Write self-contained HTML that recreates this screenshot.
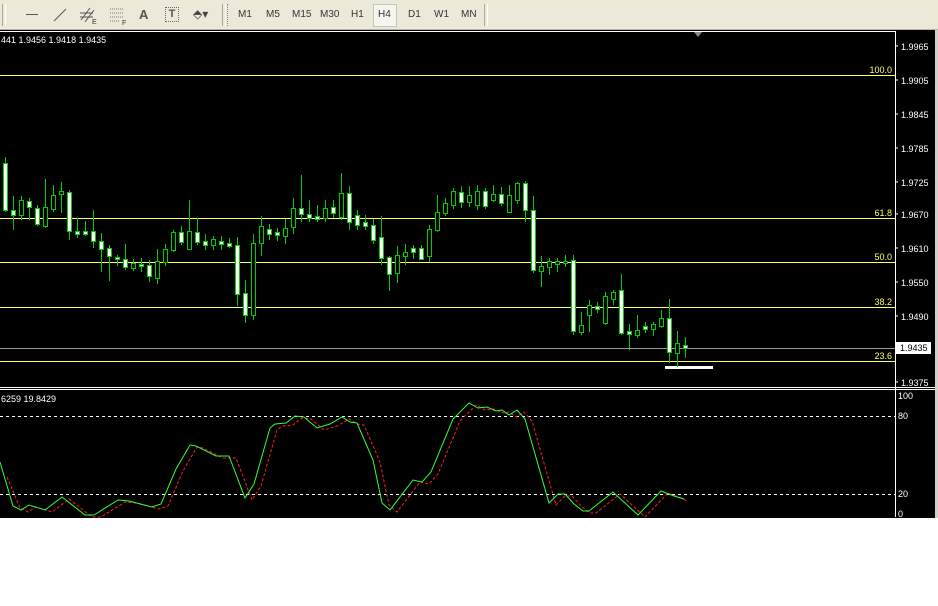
<!DOCTYPE html>
<html><head><meta charset="utf-8"><style>
body{margin:0;width:938px;height:606px;background:#fff;overflow:hidden;font-family:"Liberation Sans",sans-serif;position:relative}
#tb{position:absolute;left:0;top:0;width:938px;height:29px;background:#ece9d8;border-bottom:1px solid #b8b4a0}
#tb span{position:absolute;top:9px;font-size:10px;color:#333}
.sep{position:absolute;top:4px;width:2px;height:22px;border-left:1px solid #aca899;border-right:1px solid #fff}
#h4{position:absolute;left:373px;top:4px;width:22px;height:21px;background:#f6f5ef;border:1px solid #c8c5b5}
</style></head><body>
<div id="tb">
<div class="sep" style="left:2px"></div>
<div style="position:absolute;left:26px;top:14px;width:12px;height:1px;background:#555"></div>
<svg style="position:absolute;left:50px;top:6px" width="20" height="18"><line x1="4" y1="15" x2="16" y2="3" stroke="#555"/></svg>
<svg style="position:absolute;left:78px;top:4px" width="22" height="22"><g stroke="#555" fill="none"><line x1="3" y1="16" x2="12" y2="4"/><line x1="7" y1="18" x2="16" y2="6"/><line x1="2" y1="9" x2="15" y2="9"/><line x1="2" y1="13" x2="15" y2="13"/></g><text x="14" y="20" font-size="7" fill="#333">E</text></svg>
<svg style="position:absolute;left:108px;top:5px" width="22" height="20"><g stroke="#777" stroke-dasharray="1,1"><line x1="2" y1="4" x2="16" y2="4"/><line x1="2" y1="8" x2="16" y2="8"/><line x1="2" y1="12" x2="16" y2="12"/><line x1="2" y1="16" x2="12" y2="16"/></g><text x="14" y="20" font-size="7" fill="#333">F</text></svg>
<span style="left:139px;top:7px;font-size:13px;font-weight:bold;color:#555">A</span>
<div style="position:absolute;left:165px;top:7px;width:12px;height:13px;border:1px dotted #666;font-size:11px;font-weight:bold;text-align:center;line-height:13px;color:#555">T</div>
<span style="left:193px;top:7px;font-size:12px;color:#444">⬘▾</span>
<div class="sep" style="left:222px"></div>
<div class="sep" style="left:227px;border-left:1px dotted #888;border-right:none"></div>
<div id="h4"></div>
<span style="left:238px">M1</span><span style="left:266px">M5</span><span style="left:292px">M15</span><span style="left:320px">M30</span><span style="left:351px">H1</span><span style="left:378px">H4</span><span style="left:408px">D1</span><span style="left:434px">W1</span><span style="left:461px">MN</span>
<div class="sep" style="left:484px"></div>
</div>
<svg style="position:absolute;left:0;top:30px" width="938" height="488" viewBox="0 30 938 488">
<rect x="0" y="30" width="935" height="488" fill="#000"/>
<rect x="935" y="30" width="3" height="488" fill="#d4d0c8"/>
<line x1="0" y1="31.5" x2="895" y2="31.5" stroke="#fff"/>
<line x1="895.5" y1="31" x2="895.5" y2="517" stroke="#fff"/>
<polygon points="694,32 702,32 698,37" fill="#888"/>
<line x1="0" y1="387.5" x2="935" y2="387.5" stroke="#fff"/>
<line x1="0" y1="389.5" x2="935" y2="389.5" stroke="#fff"/>
<g stroke="#ffff66" stroke-width="1">
<line x1="0" y1="75.5" x2="895" y2="75.5"/><line x1="0" y1="218.5" x2="895" y2="218.5"/><line x1="0" y1="262.5" x2="895" y2="262.5"/><line x1="0" y1="307.5" x2="895" y2="307.5"/><line x1="0" y1="361.5" x2="895" y2="361.5"/>
</g>
<line x1="0" y1="348.5" x2="895" y2="348.5" stroke="#9a9a9a"/>
<g fill="#ffff66" font-size="9" font-family="Liberation Sans" text-anchor="end">
<text x="892" y="73">100.0</text><text x="892" y="216">61.8</text><text x="892" y="260">50.0</text><text x="892" y="305">38.2</text><text x="892" y="359">23.6</text>
</g>
<rect x="665" y="366" width="48" height="3" fill="#fff"/>
<g fill="#fff" font-size="9" font-family="Liberation Sans">
<text x="1" y="43">441 1.9456 1.9418 1.9435</text>
<text x="1" y="402">6259 19.8429</text>
<text x="901" y="50">1.9965</text><text x="901" y="84">1.9905</text><text x="901" y="118">1.9845</text><text x="901" y="152">1.9785</text><text x="901" y="186">1.9725</text><text x="901" y="218">1.9670</text><text x="901" y="252">1.9610</text><text x="901" y="286">1.9550</text><text x="901" y="320">1.9490</text><text x="901" y="386">1.9375</text>
<text x="898" y="399">100</text><text x="898" y="419">80</text><text x="898" y="497">20</text><text x="898" y="517">0</text>
</g>
<g stroke="#fff"><line x1="895" y1="46" x2="898" y2="46"/><line x1="895" y1="80" x2="898" y2="80"/><line x1="895" y1="114" x2="898" y2="114"/><line x1="895" y1="148" x2="898" y2="148"/><line x1="895" y1="182" x2="898" y2="182"/><line x1="895" y1="214" x2="898" y2="214"/><line x1="895" y1="248" x2="898" y2="248"/><line x1="895" y1="282" x2="898" y2="282"/><line x1="895" y1="316" x2="898" y2="316"/><line x1="895" y1="382" x2="898" y2="382"/></g>
<rect x="896" y="342" width="35" height="12" fill="#fff"/>
<text x="900" y="351" font-size="9" font-family="Liberation Sans" fill="#000">1.9435</text>
<g stroke="#fff" stroke-dasharray="3,3"><line x1="0" y1="416.5" x2="895" y2="416.5"/><line x1="0" y1="494.5" x2="895" y2="494.5"/></g>
<g stroke="#00cc00" stroke-width="1" fill="#000">
<!-- candles: wick then body -->
<line x1="5.5" y1="157" x2="5.5" y2="212"/><rect x="3.5" y="163.5" width="4" height="47" fill="#fff"/>
<line x1="13.5" y1="196" x2="13.5" y2="230"/><rect x="11.5" y="210.5" width="4" height="5" fill="#fff"/>
<line x1="21.5" y1="196" x2="21.5" y2="220"/><rect x="19.5" y="200.5" width="4" height="15"/>
<line x1="29.5" y1="198" x2="29.5" y2="220"/><rect x="27.5" y="201.5" width="4" height="6" fill="#fff"/>
<line x1="37.5" y1="205" x2="37.5" y2="226"/><rect x="35.5" y="208.5" width="4" height="16" fill="#fff"/>
<line x1="45.5" y1="179" x2="45.5" y2="228"/><rect x="43.5" y="207.5" width="4" height="19"/>
<line x1="53.5" y1="185" x2="53.5" y2="212"/><rect x="51.5" y="195.5" width="4" height="14"/>
<line x1="61.5" y1="182" x2="61.5" y2="213"/><rect x="59.5" y="191.5" width="4" height="3"/>
<line x1="69.5" y1="190" x2="69.5" y2="240"/><rect x="67.5" y="192.5" width="4" height="39" fill="#fff"/>
<line x1="77.5" y1="218" x2="77.5" y2="238"/><rect x="75.5" y="231.5" width="4" height="3" fill="#fff"/>
<line x1="85.5" y1="221" x2="85.5" y2="236"/><rect x="83.5" y="231.5" width="4" height="3" fill="#fff"/>
<line x1="93.5" y1="210" x2="93.5" y2="248"/><rect x="91.5" y="231.5" width="4" height="10" fill="#fff"/>
<line x1="101.5" y1="233" x2="101.5" y2="272"/><rect x="99.5" y="241.5" width="4" height="8" fill="#fff"/>
<line x1="109.5" y1="245" x2="109.5" y2="281"/><rect x="107.5" y="248.5" width="4" height="8" fill="#fff"/>
<line x1="117.5" y1="255" x2="117.5" y2="266"/><rect x="115.5" y="257.5" width="4" height="2" fill="#fff"/>
<line x1="125.5" y1="244" x2="125.5" y2="270"/><rect x="123.5" y="259.5" width="4" height="8" fill="#fff"/>
<line x1="133.5" y1="259" x2="133.5" y2="271"/><rect x="131.5" y="263.5" width="4" height="5"/>
<line x1="141.5" y1="258" x2="141.5" y2="272"/><rect x="139.5" y="264.5" width="4" height="2" fill="#fff"/>
<line x1="149.5" y1="260" x2="149.5" y2="282"/><rect x="147.5" y="265.5" width="4" height="11" fill="#fff"/>
<line x1="157.5" y1="249" x2="157.5" y2="284"/><rect x="155.5" y="261.5" width="4" height="17"/>
<line x1="165.5" y1="244" x2="165.5" y2="266"/><rect x="163.5" y="249.5" width="4" height="13"/>
<line x1="173.5" y1="230" x2="173.5" y2="252"/><rect x="171.5" y="232.5" width="4" height="18"/>
<line x1="181.5" y1="226" x2="181.5" y2="245"/><rect x="179.5" y="232.5" width="4" height="10" fill="#fff"/>
<line x1="189.5" y1="200" x2="189.5" y2="250"/><rect x="187.5" y="231.5" width="4" height="18"/>
<line x1="197.5" y1="218" x2="197.5" y2="245"/><rect x="195.5" y="232.5" width="4" height="10" fill="#fff"/>
<line x1="205.5" y1="234" x2="205.5" y2="250"/><rect x="203.5" y="241.5" width="4" height="4" fill="#fff"/>
<line x1="213.5" y1="236" x2="213.5" y2="250"/><rect x="211.5" y="239.5" width="4" height="6"/>
<line x1="221.5" y1="236" x2="221.5" y2="250"/><rect x="219.5" y="241.5" width="4" height="3" fill="#fff"/>
<line x1="229.5" y1="238" x2="229.5" y2="248"/><rect x="227.5" y="243.5" width="4" height="3" fill="#fff"/>
<line x1="237.5" y1="237" x2="237.5" y2="306"/><rect x="235.5" y="245.5" width="4" height="49" fill="#fff"/>
<line x1="245.5" y1="280" x2="245.5" y2="323"/><rect x="243.5" y="293.5" width="4" height="22" fill="#fff"/>
<line x1="253.5" y1="234" x2="253.5" y2="320"/><rect x="251.5" y="243.5" width="4" height="72"/>
<line x1="261.5" y1="216" x2="261.5" y2="256"/><rect x="259.5" y="226.5" width="4" height="17"/>
<line x1="269.5" y1="224" x2="269.5" y2="240"/><rect x="267.5" y="229.5" width="4" height="5" fill="#fff"/>
<line x1="277.5" y1="228" x2="277.5" y2="241"/><rect x="275.5" y="232.5" width="4" height="3" fill="#fff"/>
<line x1="285.5" y1="219" x2="285.5" y2="244"/><rect x="283.5" y="228.5" width="4" height="8"/>
<line x1="293.5" y1="198" x2="293.5" y2="234"/><rect x="291.5" y="208.5" width="4" height="19"/>
<line x1="301.5" y1="175" x2="301.5" y2="222"/><rect x="299.5" y="208.5" width="4" height="6" fill="#fff"/>
<line x1="309.5" y1="200" x2="309.5" y2="222"/><rect x="307.5" y="214.5" width="4" height="4" fill="#fff"/>
<line x1="317.5" y1="205" x2="317.5" y2="222"/><rect x="315.5" y="216.5" width="4" height="3" fill="#fff"/>
<line x1="325.5" y1="200" x2="325.5" y2="222"/><rect x="323.5" y="208.5" width="4" height="10"/>
<line x1="333.5" y1="200" x2="333.5" y2="218"/><rect x="331.5" y="207.5" width="4" height="6" fill="#fff"/>
<line x1="341.5" y1="173" x2="341.5" y2="220"/><rect x="339.5" y="193.5" width="4" height="24"/>
<line x1="349.5" y1="186" x2="349.5" y2="230"/><rect x="347.5" y="193.5" width="4" height="29" fill="#fff"/>
<line x1="357.5" y1="210" x2="357.5" y2="230"/><rect x="355.5" y="215.5" width="4" height="10" fill="#fff"/>
<line x1="365.5" y1="215" x2="365.5" y2="230"/><rect x="363.5" y="222.5" width="4" height="4" fill="#fff"/>
<line x1="373.5" y1="219" x2="373.5" y2="244"/><rect x="371.5" y="225.5" width="4" height="15" fill="#fff"/>
<line x1="381.5" y1="216" x2="381.5" y2="265"/><rect x="379.5" y="237.5" width="4" height="21" fill="#fff"/>
<line x1="389.5" y1="256" x2="389.5" y2="291"/><rect x="387.5" y="257.5" width="4" height="17" fill="#fff"/>
<line x1="397.5" y1="246" x2="397.5" y2="283"/><rect x="395.5" y="255.5" width="4" height="18"/>
<line x1="405.5" y1="244" x2="405.5" y2="265"/><rect x="403.5" y="252.5" width="4" height="4"/>
<line x1="413.5" y1="245" x2="413.5" y2="259"/><rect x="411.5" y="248.5" width="4" height="4" fill="#fff"/>
<line x1="421.5" y1="245" x2="421.5" y2="260"/><rect x="419.5" y="248.5" width="4" height="11" fill="#fff"/>
<line x1="429.5" y1="225" x2="429.5" y2="262"/><rect x="427.5" y="229.5" width="4" height="27"/>
<line x1="437.5" y1="195" x2="437.5" y2="232"/><rect x="435.5" y="212.5" width="4" height="18"/>
<line x1="445.5" y1="198" x2="445.5" y2="216"/><rect x="443.5" y="203.5" width="4" height="10"/>
<line x1="453.5" y1="188" x2="453.5" y2="209"/><rect x="451.5" y="191.5" width="4" height="14"/>
<line x1="461.5" y1="186" x2="461.5" y2="208"/><rect x="459.5" y="192.5" width="4" height="10" fill="#fff"/>
<line x1="469.5" y1="186" x2="469.5" y2="207"/><rect x="467.5" y="195.5" width="4" height="7"/>
<line x1="477.5" y1="185" x2="477.5" y2="210"/><rect x="475.5" y="191.5" width="4" height="14"/>
<line x1="485.5" y1="188" x2="485.5" y2="209"/><rect x="483.5" y="191.5" width="4" height="15" fill="#fff"/>
<line x1="493.5" y1="185" x2="493.5" y2="202"/><rect x="491.5" y="194.5" width="4" height="6"/>
<line x1="501.5" y1="187" x2="501.5" y2="206"/><rect x="499.5" y="194.5" width="4" height="9" fill="#fff"/>
<line x1="509.5" y1="185" x2="509.5" y2="210"/><rect x="507.5" y="195.5" width="4" height="17"/>
<line x1="517.5" y1="182" x2="517.5" y2="204"/><rect x="515.5" y="183.5" width="4" height="17"/>
<line x1="525.5" y1="181" x2="525.5" y2="222"/><rect x="523.5" y="183.5" width="4" height="27" fill="#fff"/>
<line x1="533.5" y1="196" x2="533.5" y2="273"/><rect x="531.5" y="210.5" width="4" height="60" fill="#fff"/>
<line x1="541.5" y1="256" x2="541.5" y2="287"/><rect x="539.5" y="266.5" width="4" height="5"/>
<line x1="549.5" y1="258" x2="549.5" y2="275"/><rect x="547.5" y="261.5" width="4" height="6"/>
<line x1="557.5" y1="258" x2="557.5" y2="272"/><rect x="555.5" y="261.5" width="4" height="3"/>
<line x1="565.5" y1="255" x2="565.5" y2="267"/><rect x="563.5" y="261.5" width="4" height="2"/>
<line x1="573.5" y1="255" x2="573.5" y2="335"/><rect x="571.5" y="260.5" width="4" height="71" fill="#fff"/>
<line x1="581.5" y1="312" x2="581.5" y2="335"/><rect x="579.5" y="325.5" width="4" height="7"/>
<line x1="589.5" y1="300" x2="589.5" y2="332"/><rect x="587.5" y="305.5" width="4" height="10"/>
<line x1="597.5" y1="302" x2="597.5" y2="313"/><rect x="595.5" y="306.5" width="4" height="3" fill="#fff"/>
<line x1="605.5" y1="292" x2="605.5" y2="325"/><rect x="603.5" y="296.5" width="4" height="27"/>
<line x1="613.5" y1="290" x2="613.5" y2="305"/><rect x="611.5" y="292.5" width="4" height="7"/>
<line x1="621.5" y1="274" x2="621.5" y2="335"/><rect x="619.5" y="290.5" width="4" height="43" fill="#fff"/>
<line x1="629.5" y1="324" x2="629.5" y2="350"/><rect x="627.5" y="331.5" width="4" height="3" fill="#fff"/>
<line x1="637.5" y1="315" x2="637.5" y2="338"/><rect x="635.5" y="330.5" width="4" height="5"/>
<line x1="645.5" y1="322" x2="645.5" y2="333"/><rect x="643.5" y="326.5" width="4" height="3" fill="#fff"/>
<line x1="653.5" y1="322" x2="653.5" y2="336"/><rect x="651.5" y="324.5" width="4" height="5"/>
<line x1="661.5" y1="310" x2="661.5" y2="328"/><rect x="659.5" y="318.5" width="4" height="8"/>
<line x1="669.5" y1="299" x2="669.5" y2="363"/><rect x="667.5" y="318.5" width="4" height="34" fill="#fff"/>
<line x1="677.5" y1="331" x2="677.5" y2="367"/><rect x="675.5" y="343.5" width="4" height="10"/>
<line x1="685.5" y1="337" x2="685.5" y2="358"/><rect x="683.5" y="345.5" width="4" height="3" fill="#fff"/>
</g>
<polyline fill="none" stroke="#ff2020" stroke-dasharray="3,2" transform="translate(7,2)" points="0,475 13,506 21,510 29,505 45,510 62,497 85,515 94,515 118,500 129,501 152,507 161,504 176,469 190,445 196,446 216,456 229,456 245,498 254,484 270,428 275,424 286,423 295,416 304,417 317,428 330,424 342,417 350,422 357,423 373,460 382,503 390,510 413,480 422,482 431,472 453,419 469,403 478,408 487,407 496,411 502,410 509,415 517,410 525,419 549,503 558,494 565,494 574,504 583,511 589,511 613,492 638,515 661,491 674,496 680,499"/>
<polyline fill="none" stroke="#33ff33" points="0,462 13,506 21,510 29,505 45,510 62,497 85,515 94,515 118,500 129,501 152,507 161,504 176,469 190,445 196,446 216,456 229,456 245,498 254,484 270,428 275,424 286,423 295,416 304,417 317,428 330,424 342,417 350,422 357,423 373,460 382,503 390,510 413,480 422,482 431,472 453,419 469,403 478,408 487,407 496,411 502,410 509,415 517,410 525,419 549,503 558,494 565,494 574,504 583,511 589,511 613,492 638,515 661,491 674,496 684,499"/>
</svg>
</body></html>
